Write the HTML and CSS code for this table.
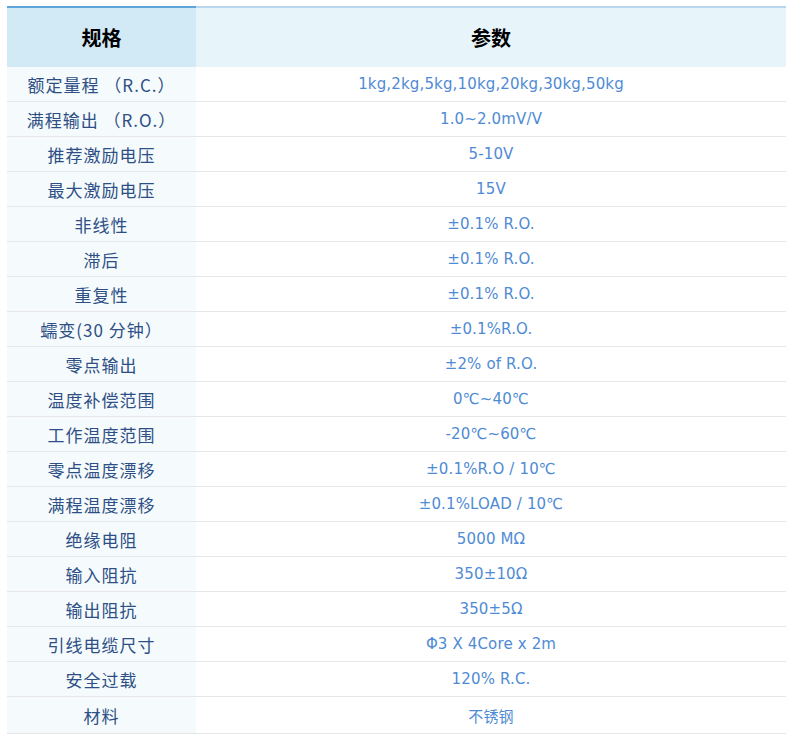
FILE: index.html
```html
<!DOCTYPE html>
<html lang="zh">
<head>
<meta charset="utf-8">
<link rel="stylesheet" href="styles.css">
</head>
<body>
<table class="spec">
  <thead>
    <tr><th class="h-key">规格</th><th class="h-val">参数</th></tr>
  </thead>
  <tbody>
    <tr><td class="k">额定量程 （R.C.）</td><td class="v">1kg,2kg,5kg,10kg,20kg,30kg,50kg</td></tr>
    <tr><td class="k">满程输出 （R.O.）</td><td class="v">1.0~2.0mV/V</td></tr>
    <tr><td class="k">推荐激励电压</td><td class="v">5-10V</td></tr>
    <tr><td class="k">最大激励电压</td><td class="v">15V</td></tr>
    <tr><td class="k">非线性</td><td class="v">±0.1% R.O.</td></tr>
    <tr><td class="k">滞后</td><td class="v">±0.1% R.O.</td></tr>
    <tr><td class="k">重复性</td><td class="v">±0.1% R.O.</td></tr>
    <tr><td class="k">蠕变(30 分钟）</td><td class="v">±0.1%R.O.</td></tr>
    <tr><td class="k">零点输出</td><td class="v">±2% of R.O.</td></tr>
    <tr><td class="k">温度补偿范围</td><td class="v">0℃~40℃</td></tr>
    <tr><td class="k">工作温度范围</td><td class="v">-20℃~60℃</td></tr>
    <tr><td class="k">零点温度漂移</td><td class="v">±0.1%R.O / 10℃</td></tr>
    <tr><td class="k">满程温度漂移</td><td class="v">±0.1%LOAD / 10℃</td></tr>
    <tr><td class="k">绝缘电阻</td><td class="v">5000 MΩ</td></tr>
    <tr><td class="k">输入阻抗</td><td class="v">350±10Ω</td></tr>
    <tr><td class="k">输出阻抗</td><td class="v">350±5Ω</td></tr>
    <tr><td class="k">引线电缆尺寸</td><td class="v">Φ3 X 4Core x 2m</td></tr>
    <tr><td class="k">安全过载</td><td class="v">120% R.C.</td></tr>
    <tr class="last"><td class="k">材料</td><td class="v">不锈钢</td></tr>
  </tbody>
</table>
</body>
</html>
```
FILE: styles.css
```css
html, body {
  margin: 0;
  padding: 0;
  background: #ffffff;
}
body {
  padding: 6px 0 0 7px;
  font-family: "DejaVu Sans", "Noto Sans CJK SC", sans-serif;
}
.spec {
  width: 779px;
  border-collapse: collapse;
  table-layout: fixed;
}
.spec th {
  height: 59px;
  padding: 0;
  font-family: "Noto Sans CJK SC", sans-serif;
  font-size: 20px;
  font-weight: bold;
  color: #000;
  text-align: center;
  vertical-align: middle;
}
.spec .h-key {
  width: 189px;
  background: #d2e9f6;
  border-top: 2px solid #5fa5d9;
}
.spec .h-val {
  background: #e7f5fb;
  border-top: 2px solid #b8d6ec;
}
.spec td {
  height: 34px;
  padding: 0;
  text-align: center;
  vertical-align: middle;
  border-bottom: 1px solid #e6e6e6;
}
.spec .last td {
  height: 36px;
}
.spec .k {
  background: #f5fafc;
  color: #2d4f85;
  font-family: "Noto Sans CJK SC", sans-serif;
  font-size: 17px;
  letter-spacing: 1px;
}
.spec .v {
  color: #4f8bd4;
  font-family: "DejaVu Sans", "Noto Sans CJK SC", sans-serif;
  font-size: 15px;
  letter-spacing: 0.15px;
}
```
